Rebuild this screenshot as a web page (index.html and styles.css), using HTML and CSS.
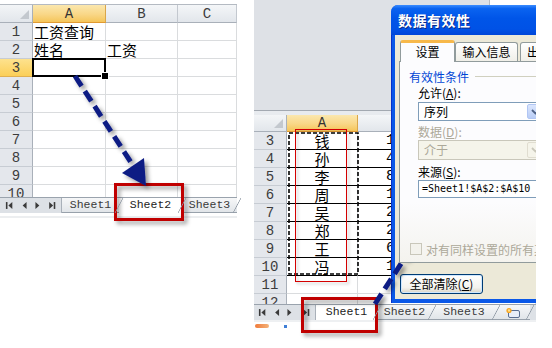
FILE: index.html
```html
<!DOCTYPE html>
<html lang="zh">
<head>
<meta charset="utf-8">
<title>数据有效性</title>
<link rel="stylesheet" href="styles.css">
</head>
<body>
<div class="page">
  <section class="pane pane-left">
    <div class="top-strip"></div>
    <div class="sheet sheet-l">
      <div class="row hdr">
        <div class="corner w-rh"></div>
        <div class="ch sel l-a">A</div>
        <div class="ch l-b">B</div>
        <div class="ch l-c">C</div>
      </div>
      <div class="row"><div class="rh w-rh">1</div><div class="c l-a">工资查询</div><div class="c l-b"></div><div class="c l-c"></div></div>
      <div class="row"><div class="rh w-rh">2</div><div class="c l-a">姓名</div><div class="c l-b">工资</div><div class="c l-c"></div></div>
      <div class="row"><div class="rh sel w-rh">3</div><div class="c active l-a"></div><div class="c l-b"></div><div class="c l-c"></div></div>
      <div class="row"><div class="rh w-rh">4</div><div class="c l-a"></div><div class="c l-b"></div><div class="c l-c"></div></div>
      <div class="row"><div class="rh w-rh">5</div><div class="c l-a"></div><div class="c l-b"></div><div class="c l-c"></div></div>
      <div class="row"><div class="rh w-rh">6</div><div class="c l-a"></div><div class="c l-b"></div><div class="c l-c"></div></div>
      <div class="row"><div class="rh w-rh">7</div><div class="c l-a"></div><div class="c l-b"></div><div class="c l-c"></div></div>
      <div class="row"><div class="rh w-rh">8</div><div class="c l-a"></div><div class="c l-b"></div><div class="c l-c"></div></div>
      <div class="row"><div class="rh w-rh">9</div><div class="c l-a"></div><div class="c l-b"></div><div class="c l-c"></div></div>
      <div class="row part-l"><div class="rh w-rh">10</div><div class="c l-a"></div><div class="c l-b"></div><div class="c l-c"></div></div>
    </div>
    <div class="tabbar">
      <svg class="nav" width="62" height="15" viewBox="0 0 62 15">
        <g fill="#3a3a3a">
          <rect x="6" y="4" width="1.6" height="7"/><polygon points="12.5,4 12.5,11 8.5,7.5"/>
          <polygon points="27,4 27,11 23,7.5"/>
          <polygon points="36,4 36,11 40,7.5"/>
          <polygon points="50,4 50,11 54,7.5"/><rect x="54.6" y="4" width="1.6" height="7"/>
        </g>
      </svg>
      <div class="tab tl1">Sheet1</div>
      <div class="tab active tl2">Sheet2</div>
      <div class="tab tl3">Sheet3</div>
    </div>
    <div class="foot foot-l"></div>
  </section>

  <section class="pane pane-right">
    <div class="top-grey"></div>
    <div class="band"></div>
    <div class="sheet sheet-r">
      <div class="row hdr-r">
        <div class="corner w-rh"></div>
        <div class="ch sel r-a">A</div>
        <div class="ch r-b"></div>
      </div>
      <div class="row"><div class="rh w-rh">3</div><div class="c tb name r-a">钱</div><div class="c tb num r-b">1500</div></div>
      <div class="row"><div class="rh w-rh">4</div><div class="c tb name r-a">孙</div><div class="c tb num r-b">4200</div></div>
      <div class="row"><div class="rh w-rh">5</div><div class="c tb name r-a">李</div><div class="c tb num r-b">8000</div></div>
      <div class="row"><div class="rh w-rh">6</div><div class="c tb name r-a">周</div><div class="c tb num r-b">1800</div></div>
      <div class="row"><div class="rh w-rh">7</div><div class="c tb name r-a">吴</div><div class="c tb num r-b">2500</div></div>
      <div class="row"><div class="rh w-rh">8</div><div class="c tb name r-a">郑</div><div class="c tb num r-b">2600</div></div>
      <div class="row"><div class="rh w-rh">9</div><div class="c tb name r-a">王</div><div class="c tb num r-b">6000</div></div>
      <div class="row"><div class="rh w-rh">10</div><div class="c tb name r-a">冯</div><div class="c tb num r-b">1200</div></div>
      <div class="row"><div class="rh w-rh">11</div><div class="c r-a"></div><div class="c r-b"></div></div>
      <div class="row part-r"><div class="rh w-rh">12</div><div class="c r-a"></div><div class="c r-b"></div></div>
    </div>
    <div class="tabbar tabbar-r">
      <svg class="nav" width="62" height="15" viewBox="0 0 62 15">
        <g fill="#3a3a3a">
          <rect x="5" y="4" width="1.6" height="7"/><polygon points="11.5,4 11.5,11 7.5,7.5"/>
          <polygon points="25.5,4 25.5,11 21.5,7.5"/>
          <polygon points="34,4 34,11 38,7.5"/>
          <polygon points="50,4 50,11 54,7.5"/><rect x="54.6" y="4" width="1.6" height="7"/>
        </g>
      </svg>
      <div class="tab active tr1">Sheet1</div>
      <div class="tab tr2">Sheet2</div>
      <div class="tab tr3">Sheet3</div>
      <div class="tab tr4">
        <svg width="16" height="12" viewBox="0 0 16 12">
          <rect x="3.5" y="3.5" width="11" height="7" rx="1.5" fill="#e8eef8" stroke="#5a6e90"/>
          <circle cx="4" cy="3.5" r="2.6" fill="#f6a623"/>
          <circle cx="4" cy="3.5" r="1.2" fill="#ffe08a"/>
        </svg>
      </div>
    </div>
    <div class="foot foot-r"><span class="stat-a"></span><span class="stat-b"></span></div>

    <div class="dialog">
      <div class="title">数据有效性</div>
      <div class="frame">
        <div class="dbody">
          <div class="dtabs">
            <div class="dtab on">设置</div>
            <div class="dtab t2">输入信息</div>
            <div class="dtab t3">出错警告</div>
          </div>
          <div class="dpanel">
            <div class="legend">有效性条件</div>
            <div class="group">
              <div class="lbl">允许(<u>A</u>):</div>
              <div class="combo"><span class="val">序列</span><span class="cbtn"><svg width="9" height="6" viewBox="0 0 9 6"><path d="M1 1 L4.5 4.5 L8 1" fill="none" stroke="#4d6185" stroke-width="1.8"/></svg></span></div>
              <div class="lbl dis l2">数据(<u>D</u>):</div>
              <div class="combo off"><span class="val">介于</span><span class="cbtn"><svg width="9" height="6" viewBox="0 0 9 6"><path d="M1 1 L4.5 4.5 L8 1" fill="none" stroke="#c9c7ba" stroke-width="1.8"/></svg></span></div>
              <div class="lbl l3">来源(<u>S</u>):</div>
              <div class="field">=Sheet1!$A$2:$A$10</div>
            </div>
            <div class="check"><span class="box"></span><span>对有同样设置的所有其他单元格应用这些更改</span></div>
          </div>
          <div class="btn">全部清除(<u>C</u>)</div>
        </div>
      </div>
    </div>
  </section>

  <svg class="overlay" width="552" height="348" viewBox="0 0 552 348">
    <defs>
      <filter id="sh" x="-30%" y="-30%" width="160%" height="160%">
        <feDropShadow dx="3" dy="3" stdDeviation="2" flood-color="#000" flood-opacity="0.4"/>
      </filter>
      <filter id="sh2" x="-30%" y="-30%" width="160%" height="160%">
        <feDropShadow dx="2" dy="2" stdDeviation="1.5" flood-color="#000" flood-opacity="0.25"/>
      </filter>
    </defs>
    <rect x="289" y="133" width="69" height="141" fill="none" stroke="#000" stroke-width="1.6" stroke-dasharray="4 2"/>
    <rect x="295.5" y="129.5" width="51" height="152" fill="none" stroke="#d40000" stroke-width="1" filter="url(#sh2)"/>
    <g filter="url(#sh)">
      <rect x="115.5" y="184.5" width="67" height="35" fill="none" stroke="#c00000" stroke-width="3"/>
      <rect x="302.5" y="298.5" width="74" height="33" fill="none" stroke="#c00000" stroke-width="3"/>
    </g>
    <g filter="url(#sh)">
      <line x1="75" y1="76" x2="134" y2="167" stroke="#0f1d84" stroke-width="5" stroke-dasharray="12 6"/>
      <polygon points="146,186 122,173 144,158" fill="#0f1d84"/>
      <line x1="375" y1="304" x2="430" y2="219" stroke="#0f1d84" stroke-width="5" stroke-dasharray="12 6"/>
      <polygon points="443,201 419,213 440,228" fill="#0f1d84"/>
    </g>
  </svg>
</div>
</body>
</html>
```

FILE: styles.css
```css
* { box-sizing: border-box; margin: 0; padding: 0; }
html, body { width: 552px; height: 348px; overflow: hidden; background: #fff; }
body { font-family: "Noto Sans CJK SC", "Liberation Sans", sans-serif; color: #000; }

.page { position: relative; display: flex; width: 552px; height: 348px; }
.pane { display: flex; flex-direction: column; height: 348px; }
.pane-left { width: 237px; }
.pane-right { position: relative; width: 282px; margin-left: 17px; overflow: hidden; }

/* ---------- sheet grid ---------- */
.top-strip { height: 5px; border-bottom: 1px solid #b4bac2; background: #fff; }
.sheet { overflow: hidden; flex: none; }
.sheet-l { height: 192px; }
.sheet-r { height: 189px; }

.row { display: flex; height: 18px; align-items: flex-start; }
.row > div { height: 18px; flex: none; }
.row.hdr-r { height: 17px; }
.row.hdr-r > div { height: 17px; }
.row.part-l { height: 12px; overflow: hidden; }
.row.part-r { height: 10px; overflow: hidden; }

.w-rh { width: 33px; }
.l-a { width: 73px; }
.l-b { width: 72px; }
.l-c { width: 59px; }
.r-a { width: 71px; }
.r-b { width: 178px; }

.corner {
  position: relative;
  background: linear-gradient(#f3f5f7, #e2e6eb);
  border-right: 1px solid #a9b0b9;
  border-bottom: 1px solid #a9b0b9;
}
.corner::after {
  content: "";
  position: absolute;
  right: 3px;
  bottom: 3px;
  border-left: 9px solid transparent;
  border-bottom: 9px solid #c3c8ce;
}
.ch {
  background: linear-gradient(#f4f6f8, #e2e6eb);
  border-right: 1px solid #c3c8cf;
  border-bottom: 1px solid #a9b0b9;
  font: 14px/18px "Liberation Mono", monospace;
  color: #3c3c3c;
  text-align: center;
}
.hdr-r .ch { line-height: 17px; }
.ch.sel {
  background: linear-gradient(#fbe7ae, #f9d787 55%, #f5c55a);
  border-right-color: #d9a64a;
  border-bottom-color: #e09a32;
  color: #333;
}
.rh {
  background: #e4e7ec;
  border-right: 1px solid #a9b0b9;
  border-bottom: 1px solid #c7ccd3;
  font: 14px/18px "Liberation Mono", monospace;
  color: #3c3c3c;
  text-align: center;
}
.rh.sel {
  background: linear-gradient(#fde28e, #fbcf58);
  border-right-color: #e09a32;
  border-bottom-color: #e0b050;
}
.c {
  border-right: 1px solid #dadcde;
  border-bottom: 1px solid #dadcde;
  font-size: 15px;
  line-height: 18px;
  padding-left: 1px;
  white-space: nowrap;
}
.c.active { position: relative; }
.c.active::after {
  content: "";
  position: absolute;
  left: -1px; top: -1px; right: -1px; bottom: -1px;
  border: 2px solid #000;
}
.c.active::before {
  content: "";
  position: absolute;
  right: -4px; bottom: -4px;
  width: 6px; height: 6px;
  background: #000;
  border: 1px solid #fff;
  z-index: 1;
}
.c.tb { border-bottom-color: #000; }
.c.name { text-align: center; padding-left: 0; }
.c.num { padding-left: 28px; font: 15px/18px "Liberation Mono", monospace; }

/* ---------- sheet tabs ---------- */
.tabbar {
  flex: none;
  display: flex;
  height: 16px;
  background: #dde1e6;
  border-top: 1px solid #9aa3ad;
}
.tabbar-r { width: 282px; }
.nav { flex: none; width: 62px; border-right: 1px solid #a9b0b9; }
.tab {
  position: relative;
  flex: none;
  height: 15px;
  background: linear-gradient(#f6f7f8, #e1e5e9);
  border-bottom: 1px solid #98a1ab;
  font: 11.5px/14px "Liberation Mono", monospace;
  color: #3a3a3a;
  text-align: center;
}
.tab::after {
  content: "";
  position: absolute;
  top: 0;
  right: -4px;
  width: 8px;
  height: 15px;
  z-index: 1;
  background: linear-gradient(to bottom right, transparent calc(50% - 0.7px), #8d97a2 50%, transparent calc(50% + 0.7px));
}
.tab.active { background: #fff; border-bottom-color: #fff; color: #222; }
.tl1 { width: 57px; }
.tl2 { width: 63px; }
.tl3 { width: 55px; }
.tr1 { width: 61px; }
.tr2 { width: 55px; }
.tr3 { width: 64px; }
.tr4 { width: 34px; padding-top: 2px; }

.foot { flex: 1; background: #fff; }
.foot-l { margin-top: 3px; border-top: 2px solid #eceef0; }
.foot-r { position: relative; border-top: 2px solid #eef0f2; }
.stat-a {
  position: absolute; left: 1px; top: 2px;
  width: 14px; height: 4px; border-radius: 2px;
  background: linear-gradient(90deg, #f07a3a, #f3b37a);
}
.stat-b {
  position: absolute; left: 30px; top: 3px;
  width: 3px; height: 3px; background: #3f7fd6;
}

/* right top area */
.top-grey {
  flex: none;
  height: 111px;
  border-bottom: 1px solid #a3a9b1;
  background:
    linear-gradient(to right, #dee1e6 235px, #b6bbc2 235px, #b6bbc2 236px, #fff 236px) top left / 100% 5px no-repeat,
    #dee1e6;
}
.band { flex: none; height: 4px; background: #e8ebef; }

/* ---------- dialog ---------- */
.dialog {
  position: absolute;
  left: 137px;
  top: 5px;
  width: 200px;
  height: 298px;
  border-radius: 7px 7px 0 0;
  overflow: hidden;
  display: flex;
  flex-direction: column;
  background: #0a58e8;
}
.title {
  flex: none;
  height: 30px;
  padding-left: 7px;
  background: linear-gradient(#3b8cff 0%, #0a63f0 12%, #0055e8 45%, #0052e6 80%, #0046d8 100%);
  color: #fff;
  font-size: 14px;
  font-weight: bold;
  line-height: 30px;
  text-shadow: 1px 1px 0 #0a2a8a;
  letter-spacing: 0.5px;
}
.frame {
  flex: 1;
  padding: 0 0 4px 4px;
  background: #0a58e8;
  box-shadow: inset 1px 0 0 #0832c8;
}
.dbody {
  height: 100%;
  background: #ece9d8;
  padding: 5px 0 0 4px;
}
.dtabs {
  display: flex;
  align-items: flex-start;
  height: 21px;
  margin-left: 1px;
}
.dtab {
  flex: none;
  font-size: 12px;
  text-align: center;
  border: 1px solid #919b9c;
  border-bottom: none;
  border-radius: 3px 3px 0 0;
}
.dtab.on {
  position: relative;
  z-index: 2;
  width: 55px;
  height: 22px;
  background: #fcfcfe;
  border-top: 3px solid #f7b84a;
  line-height: 18px;
}
.dtab.t2 {
  width: 63px;
  height: 19px;
  margin-top: 2px;
  line-height: 18px;
  background: linear-gradient(#ffffff, #f0efe8);
}
.dtab.t3 {
  width: 63px;
  height: 19px;
  margin-top: 2px;
  margin-left: 2px;
  line-height: 18px;
  text-align: left;
  padding-left: 6px;
  background: linear-gradient(#ffffff, #f0efe8);
}
.dpanel {
  position: relative;
  z-index: 1;
  height: 202px;
  width: 180px;
  border: 1px solid #919b9c;
  background: linear-gradient(#fcfcfe 0%, #fcfcfe 70%, #f4f3ee 100%);
  padding-left: 9px;
}
.legend {
  display: flex;
  align-items: center;
  margin-top: 7px;
  height: 14px;
  font-size: 12px;
  color: #0046d5;
  white-space: nowrap;
}
.legend::after {
  content: "";
  flex: 1;
  margin-left: 6px;
  border-top: 1px solid #d0d0bf;
}
.group { margin-left: 9px; }
.lbl {
  margin-top: 3px;
  height: 14px;
  font-size: 12px;
  line-height: 14px;
  white-space: nowrap;
}
.lbl u { text-decoration: underline; }
.lbl.l2 { margin-top: 4px; }
.lbl.l3 { margin-top: 5px; }
.lbl.dis { color: #aca899; }
.combo {
  display: flex;
  margin-top: 2px;
  width: 127px;
  height: 19px;
  border: 1px solid #7f9db9;
  background: #fff;
}
.combo.off {
  margin-top: 1px;
  height: 20px;
  border-color: #c9c7ba;
  background: #f5f4ea;
  color: #aca899;
}
.val { padding-left: 5px; font-size: 12px; line-height: 17px; }
.combo.off .val { line-height: 18px; }
.cbtn {
  margin: 1px 1px 1px auto;
  width: 16px;
  display: flex;
  align-items: center;
  justify-content: center;
  border-radius: 2px;
  background: linear-gradient(#dbe6fd, #b9cdf6);
  border: 1px solid #b1c6f4;
}
.combo.off .cbtn { background: #f5f4ea; border-color: #e0ddd0; }
.field {
  margin-top: 1px;
  width: 127px;
  height: 18px;
  border: 1px solid #7f9db9;
  background: #fff;
  padding-left: 3px;
  font: 10px/16px "DejaVu Sans Mono", monospace;
  white-space: nowrap;
}
.check {
  display: flex;
  align-items: center;
  margin-top: 44px;
  margin-left: 1px;
  height: 14px;
  font-size: 12px;
  color: #aca899;
  white-space: nowrap;
}
.box {
  flex: none;
  width: 12px;
  height: 12px;
  margin-right: 4px;
  border: 1px solid #c9c7ba;
  background: #f3f2ec;
}
.btn {
  margin-top: 11px;
  margin-left: 1px;
  width: 83px;
  height: 20px;
  border: 1px solid #003c74;
  border-radius: 3px;
  background: linear-gradient(#ffffff, #f3f3ee 70%, #d8d3c6);
  box-shadow: inset 0 0 0 1px #cee7ff;
  font-size: 12px;
  line-height: 18px;
  text-align: center;
  white-space: nowrap;
}

/* overlay drawings */
.overlay { position: absolute; left: 0; top: 0; pointer-events: none; }
```
